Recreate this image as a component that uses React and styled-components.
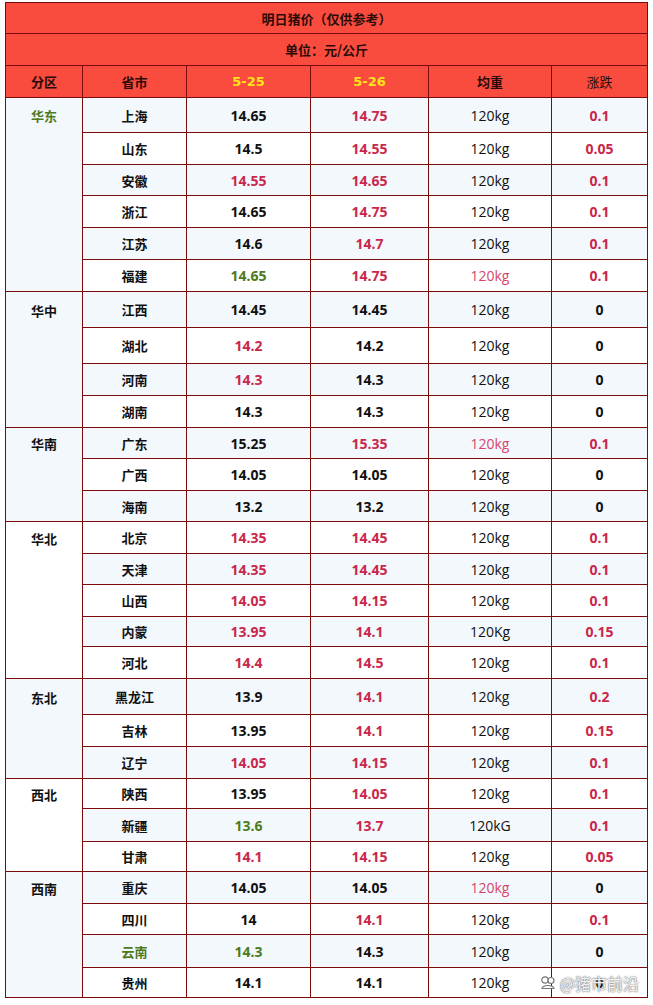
import React from "react";
import styled, { createGlobalStyle } from "styled-components";

const GlobalStyle = createGlobalStyle`
  html, body {
    margin: 0;
    padding: 0;
    background: #ffffff;
  }
`

const RED = "#c9274b";
const PINK = "#d4476a";
const GREEN = "#4d7a1d";
const INK = "#111111";
const LINE = "#7d0a0a";

const Page = styled.div`
  position: relative;
  width: 653px;
  height: 1005px;
  padding: 2px 6px 0 5px;
  box-sizing: border-box;
  font-family: "Noto Sans CJK SC", "Noto Sans", sans-serif;
`
const Table = styled.table`
  width: 642px;
  border-collapse: collapse;
  table-layout: fixed;
  border: 1px solid ${LINE};
`
const Col = styled.col`
  width: ${(p) => p.$w}px;
`
const BannerCell = styled.td`
  height: ${(p) => p.$h}px;
  padding: 0;
  background: #f94b3e;
  border: 1px solid ${LINE};
  text-align: center;
  font-size: 13px;
  font-weight: bold;
  color: #2b0b08;
`
const HeadCell = styled.td`
  height: 31px;
  padding: 0;
  background: #f94b3e;
  border: 1px solid ${LINE};
  text-align: center;
  font-size: 13px;
  font-weight: ${(p) => (p.$light ? "normal" : "bold")};
  color: ${(p) => (p.$date ? "#ffe41a" : "#2b0b08")};
  font-family: ${(p) =>
    p.$date ? '"DejaVu Sans", "Noto Sans", sans-serif' : '"Noto Sans CJK SC", sans-serif'};
`
const Row = styled.tr`
  height: ${(p) => p.$h}px;
  background: ${(p) => (p.$alt ? "#f3f8fd" : "#ffffff")};
`
const RegionCell = styled.td`
  padding: 0;
  vertical-align: top;
  border: 1px solid ${LINE};
  background: ${(p) => (p.$alt ? "#f3f8fd" : "#ffffff")};
`
const RegionName = styled.div`
  height: ${(p) => p.$h}px;
  display: flex;
  align-items: center;
  justify-content: center;
  font-size: 13px;
  font-weight: bold;
  color: ${(p) => p.$color || INK};
`
const NameCell = styled.td`
  padding: 0;
  border: 1px solid ${LINE};
  text-align: center;
  font-size: 13px;
  font-weight: bold;
  color: ${(p) => p.$color || INK};
`
const NumCell = styled.td`
  padding: 0;
  border: 1px solid ${LINE};
  text-align: center;
  font-family: "Open Sans", "DejaVu Sans", sans-serif;
  font-size: 14px;
  font-weight: ${(p) => (p.$regular ? 500 : 700)};
  color: ${(p) => p.$color || INK};
`
const Watermark = styled.div`
  position: absolute;
  right: 14px;
  bottom: 10px;
  display: flex;
  align-items: center;
  gap: 3px;
  font-size: 16px;
  color: rgba(255, 255, 255, 0.92);
  text-shadow: 0 0 1px #666, 0 0 2px #777;
  font-family: "Noto Sans CJK SC", sans-serif;
`

const c = { k: INK, r: RED, p: PINK, g: GREEN };

// [省市, 5-25, 色, 5-26, 色, 均重, 色, 涨跌, 色, 行高]
const regions = [
  {
    name: "华东",
    color: GREEN,
    rows: [
      ["上海", "14.65", "k", "14.75", "r", "120kg", "k", "0.1", "r", 35],
      ["山东", "14.5", "k", "14.55", "r", "120kg", "k", "0.05", "r", 32],
      ["安徽", "14.55", "r", "14.65", "r", "120kg", "k", "0.1", "r", 31],
      ["浙江", "14.65", "k", "14.75", "r", "120kg", "k", "0.1", "r", 32],
      ["江苏", "14.6", "k", "14.7", "r", "120kg", "k", "0.1", "r", 32],
      ["福建", "14.65", "g", "14.75", "r", "120kg", "p", "0.1", "r", 32],
    ],
  },
  {
    name: "华中",
    rows: [
      ["江西", "14.45", "k", "14.45", "k", "120kg", "k", "0", "k", 36],
      ["湖北", "14.2", "r", "14.2", "k", "120kg", "k", "0", "k", 36],
      ["河南", "14.3", "r", "14.3", "k", "120kg", "k", "0", "k", 32],
      ["湖南", "14.3", "k", "14.3", "k", "120kg", "k", "0", "k", 32],
    ],
  },
  {
    name: "华南",
    rows: [
      ["广东", "15.25", "k", "15.35", "r", "120kg", "p", "0.1", "r", 31],
      ["广西", "14.05", "k", "14.05", "k", "120kg", "k", "0", "k", 32],
      ["海南", "13.2", "k", "13.2", "k", "120kg", "k", "0", "k", 31],
    ],
  },
  {
    name: "华北",
    rows: [
      ["北京", "14.35", "r", "14.45", "r", "120kg", "k", "0.1", "r", 32],
      ["天津", "14.35", "r", "14.45", "r", "120kg", "k", "0.1", "r", 31],
      ["山西", "14.05", "r", "14.15", "r", "120kg", "k", "0.1", "r", 32],
      ["内蒙", "13.95", "r", "14.1", "r", "120Kg", "k", "0.15", "r", 30],
      ["河北", "14.4", "r", "14.5", "r", "120kg", "k", "0.1", "r", 32],
    ],
  },
  {
    name: "东北",
    rows: [
      ["黑龙江", "13.9", "k", "14.1", "r", "120kg", "k", "0.2", "r", 36],
      ["吉林", "13.95", "k", "14.1", "r", "120kg", "k", "0.15", "r", 32],
      ["辽宁", "14.05", "r", "14.15", "r", "120kg", "k", "0.1", "r", 32],
    ],
  },
  {
    name: "西北",
    rows: [
      ["陕西", "13.95", "k", "14.05", "r", "120kg", "k", "0.1", "r", 30],
      ["新疆", "13.6", "g", "13.7", "r", "120kG", "k", "0.1", "r", 33],
      ["甘肃", "14.1", "r", "14.15", "r", "120kg", "k", "0.05", "r", 30],
    ],
  },
  {
    name: "西南",
    rows: [
      ["重庆", "14.05", "k", "14.05", "k", "120kg", "p", "0", "k", 32],
      ["四川", "14", "k", "14.1", "r", "120kg", "k", "0.1", "r", 31],
      ["云南", "14.3", "g", "14.3", "k", "120kg", "k", "0", "k", 33, GREEN],
      ["贵州", "14.1", "k", "14.1", "k", "120kg", "k", "0", "k", 30],
    ],
  },
];

const widths = [77, 104, 124, 118, 123, 96];

function Logo() {
  return (
    <svg width="18" height="18" viewBox="0 0 18 18">
      <g fill="none" stroke="#777" strokeWidth="1.2">
        <circle cx="6" cy="6" r="3.2" fill="#fff" />
        <circle cx="12" cy="6.5" r="3" fill="#fff" />
        <path d="M3 14.5 C4 10.5 14 10.5 15 14.5 Z" fill="#fff" />
      </g>
    </svg>
  );
}

export default function App() {
  let idx = 0;
  const body = [];
  regions.forEach((reg) => {
    reg.rows.forEach((r, i) => {
      const alt = idx % 2 === 0;
      idx += 1;
      body.push(
        <Row key={r[0]} $h={r[9]} $alt={alt}>
          {i === 0 && (
            <RegionCell rowSpan={reg.rows.length} $alt={alt}>
              <RegionName $h={r[9]} $color={reg.color}>
                {reg.name}
              </RegionName>
            </RegionCell>
          )}
          <NameCell $color={r[10]}>{r[0]}</NameCell>
          <NumCell $color={c[r[2]]}>{r[1]}</NumCell>
          <NumCell $color={c[r[4]]}>{r[3]}</NumCell>
          <NumCell $regular $color={c[r[6]]}>{r[5]}</NumCell>
          <NumCell $color={c[r[8]]}>{r[7]}</NumCell>
        </Row>
      );
    });
  });

  return (
    <Page>
      <GlobalStyle />
      <Table>
        <colgroup>
          {widths.map((w, i) => (
            <Col key={i} $w={w} />
          ))}
        </colgroup>
        <tbody>
          <tr>
            <BannerCell colSpan={6} $h={30}>明日猪价（仅供参考）</BannerCell>
          </tr>
          <tr>
            <BannerCell colSpan={6} $h={31}>单位：元/公斤</BannerCell>
          </tr>
          <tr>
            <HeadCell>分区</HeadCell>
            <HeadCell>省市</HeadCell>
            <HeadCell $date>5-25</HeadCell>
            <HeadCell $date>5-26</HeadCell>
            <HeadCell>均重</HeadCell>
            <HeadCell $light>涨跌</HeadCell>
          </tr>
          {body}
        </tbody>
      </Table>
      <Watermark>
        <Logo />
        <span>@猪市前沿</span>
      </Watermark>
    </Page>
  );
}
